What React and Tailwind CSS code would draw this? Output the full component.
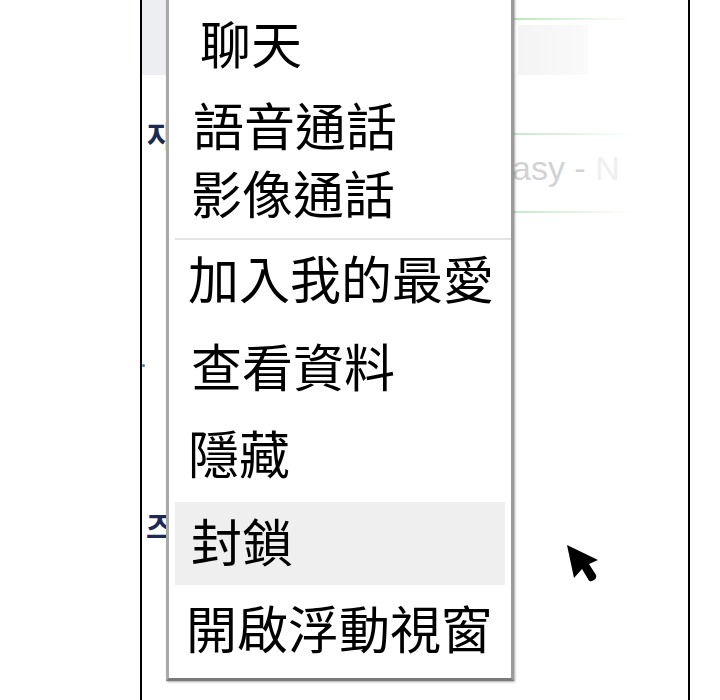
import React from 'react';

const items = [
  { label: '聊天', h: 'h-[90px]', pad: 'pt-[18px] pl-[31px]' },
  { label: '語音通話', h: 'h-[74px]', pad: 'pt-[10px] pl-[24px]' },
  { label: '影像通話', h: 'h-[66px]', pad: 'pt-[4px] pl-[22px]' },
  { sep: true },
  { label: '加入我的最愛', h: 'h-[62px]', pad: 'pt-[3px] pl-[19px]' },
  { label: '查看資料', h: 'h-[104px]', pad: 'pt-[29px] pl-[22px]' },
  { label: '隱藏', h: 'h-[87px]', pad: 'pt-[12px] pl-[19px]' },
  { label: '封鎖', h: 'h-[83px]', pad: 'pt-[13px] pl-[16px]', active: true },
  { label: '開啟浮動視窗', h: 'h-[93px]', pad: 'pt-[17px] pl-[17px]' },
];

function Cursor() {
  return (
    <svg className="absolute left-[565px] top-[543px]" width="36" height="42" viewBox="0 0 36 42">
      <path d="M2 2 L33 17 L24 21 L31 32 Q32 35 29 37 L27 38 Q24 39 23 36 L17 26 L9 35 Z" fill="#000" />
    </svg>
  );
}

export default function App() {
  return (
    <div className="relative w-[720px] h-[700px] bg-white overflow-hidden flex" style={{ fontFamily: '"Noto Sans", "Noto Sans CJK TC", sans-serif' }}>
      <div className="w-[140px] shrink-0" />
      <div className="relative w-[550px] h-full border-x-2 border-black flex">
        {/* background app, mostly hidden by the menu */}
        <div className="w-[24px] shrink-0 flex flex-col overflow-hidden">
          <div className="h-[75px] bg-[#eceef1]" />
          <div className="h-[44px]" />
          <div className="pl-[5px] text-[30px] font-bold leading-none text-[#1f2a52] whitespace-nowrap" style={{ fontFamily: '"Noto Sans CJK KR", sans-serif' }}>자동</div>
          <div className="h-[361px] relative">
            <div className="absolute left-0 top-[215px] w-[3px] h-[3px] bg-[#4a78b0] rounded-full" />
          </div>
          <div className="pl-[4px] text-[30px] font-bold leading-none text-[#1f2a52] whitespace-nowrap" style={{ fontFamily: '"Noto Sans CJK KR", sans-serif' }}>즈</div>
        </div>
        <div className="w-[348px] shrink-0" />
        <div className="flex-1 flex flex-col">
          <div className="h-[18px]" />
          <div className="h-[2px] w-[118px] bg-gradient-to-r from-[#b9e6bd] to-white" />
          <div className="h-[5px]" />
          <div className="ml-[4px] w-[70px] h-[50px] bg-gradient-to-r from-[#f4f4f5] to-[#fafafa]" />
          <div className="h-[58px]" />
          <div className="h-[2px] w-[118px] bg-gradient-to-r from-[#c4eac7] to-white" />
          <div className="h-[30px] mt-[16px] -ml-[2px] text-[34px] leading-none text-[#d2d2d5] whitespace-nowrap" style={{ fontFamily: '"Liberation Sans Narrow", "Liberation Sans", sans-serif' }}>
            asy - <span className="text-[#efeff0]">N</span>
          </div>
          <div className="h-[30px]" />
          <div className="h-[2px] w-[118px] bg-gradient-to-r from-[#c4eac7] to-white" />
        </div>

        {/* context menu */}
        <div className="absolute left-[24px] top-[-4px] w-[348px] h-[685px] bg-white border-[3px] border-[#a9a9a9] border-b-[#7a7a7a] border-r-[#9a9a9a] shadow-[1px_1px_2px_rgba(0,0,0,0.35)] flex flex-col" style={{ fontFamily: '"Noto Sans CJK TC", sans-serif' }}>
          {items.map((it, i) =>
            it.sep ? (
              <div key={i} className="h-[20px] pt-[9px] pl-[6px]">
                <div className="h-[2px] bg-[#e3e3e3]" />
              </div>
            ) : (
              <div key={i} className={`${it.h} ${it.active ? 'mx-[6px] bg-[#efefef]' : ''}`}>
                <div className={`${it.pad} text-[51px] leading-none text-black whitespace-nowrap`}>{it.label}</div>
              </div>
            )
          )}
        </div>
      </div>
      <Cursor />
    </div>
  );
}
